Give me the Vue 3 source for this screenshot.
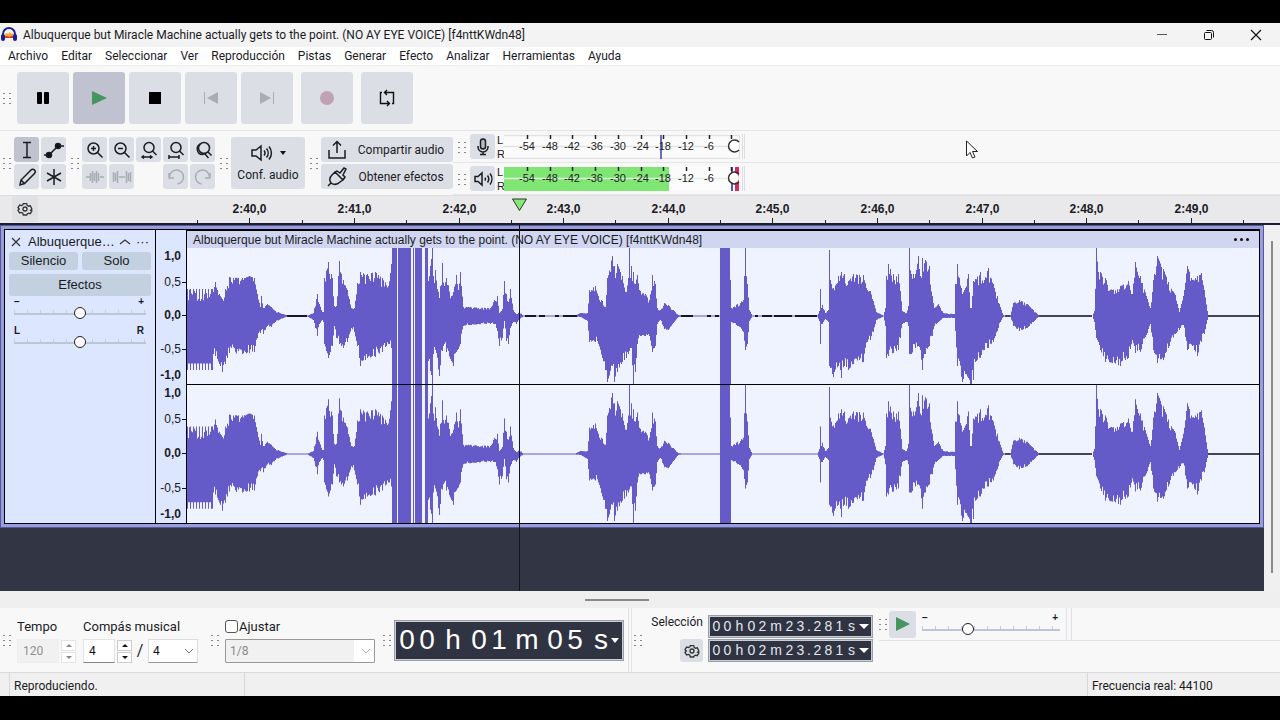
<script setup>
const menus = ['Archivo', 'Editar', 'Seleccionar', 'Ver', 'Reproducción', 'Pistas', 'Generar', 'Efecto', 'Analizar', 'Herramientas', 'Ayuda']
const title = 'Albuquerque but Miracle Machine actually gets to the point. (NO AY EYE VOICE) [f4nttKWdn48]'

// Time axis: 52 px per half second
const rulerTicks = Array.from({ length: 21 }, (_, i) => {
  const seconds = 39.5 + i * 0.5
  return {
    left: Math.round(10 + i * 52.3),
    major: i % 2 === 1,
    label: i % 2 === 1 ? `2:${seconds},0` : ''
  }
})

const meterMarks = Array.from({ length: 10 }, (_, i) => ({
  x: Math.round(23 + i * 22.7),
  label: String(-54 + i * 6)
}))

// Envelope points: x, amplitude above the axis, amplitude below the axis
const envelope = [
  [0, 27, 54], [25, 27, 54], [26, 24, 38], [28, 34, 40], [30, 26, 43], [35, 17, 56], [38, 27, 48], [42, 39, 37], [55, 38, 38], [62, 40, 37], [67, 38, 36], [70, 22, 22],
  [73, 9, 17], [74, 20, 14], [76, 8, 18], [80, 12, 10], [84, 9, 11], [88, 5, 6], [96, 2, 2], [100, .6, .6], [120, .6, .6], [126, 3, 4], [130, 22, 20], [132, 12, 8], [135, 4, 4], [136, 4, 6], [137, 38, 28],
  [141, 54, 42], [145, 38, 30], [147, 10, 10], [149, 10, 22], [152, 55, 28], [156, 36, 32], [160, 26, 26], [164, 8, 12], [167, 8, 16], [170, 33, 30],
  [173, 44, 50], [180, 42, 42], [188, 44, 41], [195, 38, 36], [201, 30, 28], [204, 52, 32], [205, 40, 30], [206, 0, 0], [240, 0, 0], [241, 35, 45], [243, 50, 55],
  [245, 68, 68], [246, 40, 38], [248, 46, 34], [252, 18, 60], [255, 53, 35], [257, 30, 28], [259, 38, 36], [264, 20, 45], [266, 24, 50], [269, 41, 36], [271, 26, 33], [273, 44, 28],
  [276, 9, 10], [283, 9, 9], [303, 8, 8], [307, 16, 8], [310, 20, 15], [312, 3, 30], [315, 7, 22], [317, 35, 5], [319, 22, 25], [321, 14, 28],
  [323, 27, 12], [326, 6, 6], [329, 2, 8], [332, 4, 3], [336, .6, .6], [388, .6, .6], [393, 3, 1], [400, 3, 5], [402, 26, 26], [408, 30, 26], [411, 20, 28],
  [415, 15, 42], [418, 9, 54], [420, 38, 66], [425, 60, 50], [427, 50, 66], [430, 52, 56], [435, 40, 46], [439, 24, 42], [441, 38, 38], [442, 68, 35], [443, 38, 32], [444, 50, 32],
  [446, 44, 68], [448, 32, 56], [450, 41, 28], [453, 25, 20], [458, 22, 20], [462, 16, 20], [465, 41, 36], [468, 32, 30], [470, 8, 8], [473, 6, 4],
  [477, 13, 13], [481, 11, 14], [486, 6, 7], [491, 1, 1], [494, .6, .6], [532, .6, .6], [533, 36, 68], [543, 36, 68], [544, 8, 6], [550, 12, 10], [556, 16, 16],
  [558, 68, 34], [560, 32, 28], [562, 6, 5], [565, .6, .6], [630, .6, .6], [632, 5, 5], [633, 27, 28], [634, 8, 8], [635, 11, 8], [638, 3, 3], [641, 6, 6], [642, 66, 50],
  [643, 36, 52], [646, 28, 61], [651, 40, 50], [654, 44, 62], [657, 42, 50], [661, 35, 54], [666, 42, 48], [676, 41, 46], [680, 26, 26], [683, 25, 24], [686, 15, 16],
  [689, 4, 4], [696, .6, .6], [698, 8, 10], [699, 40, 42], [701, 52, 40], [706, 42, 37], [711, 42, 34], [713, 25, 22], [715, 5, 8], [719, 3, 6], [721, 10, 10],
  [722, 68, 38], [724, 42, 38], [728, 42, 32], [731, 60, 30], [733, 40, 34], [735, 58, 54], [738, 56, 38], [742, 50, 30], [745, 20, 20], [747, 8, 10], [751, 12, 6],
  [756, 3, 2], [767, 2, 2], [768, 32, 15], [770, 52, 50], [775, 22, 66], [778, 28, 58], [781, 42, 62], [783, 8, 68], [784, 8, 68], [786, 35, 64], [788, 37, 46],
  [793, 44, 42], [797, 36, 34], [801, 48, 32], [806, 32, 26], [810, 20, 15], [813, 9, 6], [816, 1, 1], [818, 0, 0], [822, 0, 0], [823, 1, 1], [826, 13, 10],
  [832, 16, 15], [840, 12, 12], [846, 6, 6], [852, 0, 0], [905, 0, 0], [907, 5, 6], [909, 68, 22], [911, 44, 26], [913, 44, 34], [918, 38, 46], [925, 26, 47],
  [933, 30, 50], [941, 35, 42], [945, 22, 24], [948, 54, 37], [953, 40, 36], [960, 17, 17], [963, 8, 8], [966, 36, 34], [970, 60, 47], [976, 47, 44],
  [981, 34, 32], [988, 21, 18], [992, 4, 14], [996, 20, 9], [1000, 50, 34], [1005, 36, 30], [1010, 40, 40], [1014, 43, 26], [1017, 26, 18], [1020, 5, 4],
  [1021, 0, 0], [1072, 0, 0]
]

function noise(n) {
  const v = Math.sin(n * 12.9898) * 43758.5453
  return v - Math.floor(v)
}

function buildWave() {
  const up = []
  const down = []
  let k = 0
  for (let x = 0; x < 1072; x++) {
    while (k < envelope.length - 2 && envelope[k + 1][0] <= x) k++
    const a = envelope[k]
    const b = envelope[k + 1]
    const f = (x - a[0]) / (b[0] - a[0])
    const even = x < 26
    const ju = x === a[0] ? 1 : 1 - (even ? (x % 3 ? 0.45 : 0) * noise(x) : 0.26 * noise(x) ** 2)
    const jd = x === a[0] ? 1 : 1 - (even ? (x % 3 ? 0.12 : 0) : 0.24 * noise(x + 400) ** 2)
    up.push([x, 68 - (a[1] + (b[1] - a[1]) * f) * ju])
    down.push([x, 68 + (a[2] + (b[2] - a[2]) * f) * jd])
  }
  let d = 'M0 68'
  up.forEach(([x, y]) => { d += `V${y.toFixed(1)}H${x + 1}` })
  down.reverse().forEach(([x, y]) => { d += `V${y.toFixed(1)}H${x}` })
  return d + 'Z'
}
const wave = buildWave()
const blocks = [[205, 5], [211, 13], [226, 1], [228, 7], [238, 3], [533, 10]]
const scale = ['1,0', '0,5', '0,0', '-0,5', '-1,0']

const bigTime = ['00', 'h', '01', 'm', '05', 's']
const smallTime = ['00', 'h', '02', 'm', '23', '.', '281', 's']
</script>

<template>
  <div class="screen">
    <main class="window">
      <header class="titlebar">
        <svg class="logo" viewBox="0 0 18 16">
          <path d="M3 10V7a6 6 0 0 1 12 0v3" fill="none" stroke="#1c1ca0" stroke-width="2" />
          <path d="M4.500 8l2-2 2 1 1-2 2 2 2-1v5h-9z" fill="#f5a623" />
          <path d="M4 10l3-1 2 1 3-1 3 1v1H4z" fill="#d8331c" />
          <rect x="1" y="7" width="4" height="7" rx="2" fill="#1c1ca0" />
          <rect x="13" y="7" width="4" height="7" rx="2" fill="#1c1ca0" />
        </svg>
        <h1>{{ title }}</h1>
        <div class="winbtns">
          <button aria-label="Minimizar"><svg viewBox="0 0 12 12"><path d="M1 5.500h10" stroke="#555" /></svg></button>
          <button aria-label="Restaurar"><svg viewBox="0 0 12 12" fill="none" stroke="#111"><rect x="1.500" y="3.500" width="7" height="7" rx="1" /><path d="M3.500 1.500h5a2 2 0 0 1 2 2v5" /></svg></button>
          <button aria-label="Cerrar"><svg viewBox="0 0 12 12"><path d="M1 1l10 10M11 1L1 11" stroke="#111" stroke-width="1.200" /></svg></button>
        </div>
      </header>

      <nav class="menubar">
        <button v-for="m in menus" :key="m">{{ m }}</button>
      </nav>

      <section class="transport">
        <i class="grip"></i>
        <div class="tgroup">
          <button class="tb" aria-label="Pausa"><svg viewBox="0 0 24 24"><rect x="6" y="6" width="5" height="12" rx="1" /><rect x="13" y="6" width="5" height="12" rx="1" /></svg></button>
          <button class="tb on" aria-label="Reproducir"><svg viewBox="0 0 24 24"><path d="M5 5l15 7-15 7z" fill="#479460" /></svg></button>
          <button class="tb" aria-label="Detener"><svg viewBox="0 0 24 24"><rect x="6" y="6" width="12" height="12" /></svg></button>
          <button class="tb" aria-label="Ir al inicio"><svg viewBox="0 0 24 24" fill="#a9adb2"><rect x="5" y="6" width="1" height="12" /><path d="M19 6v12L8 12z" /></svg></button>
          <button class="tb" aria-label="Ir al final"><svg viewBox="0 0 24 24" fill="#a9adb2"><rect x="18" y="6" width="1" height="12" /><path d="M5 6v12l11-6z" /></svg></button>
        </div>
        <button class="tb" aria-label="Grabar"><svg viewBox="0 0 24 24"><circle cx="12" cy="12" r="7" fill="#bfa2b3" /></svg></button>
        <button class="tb" aria-label="Bucle"><svg viewBox="0 0 24 24" fill="none" stroke="#111" stroke-width="1.400"><path d="M7 6.500H5.500v11H14M17 17.500h1.500v-11H10M12 4L9.500 6.500L12 9M12 15l2.500 2.500L12 20" /></svg></button>
      </section>

      <section class="tools">
        <i class="grip"></i>
        <div class="grid two">
          <button class="sq on" aria-label="Selección"><svg viewBox="0 0 24 24"><path d="M8 4.500h8M8 19.500h8M12 4.500v15" /></svg></button>
          <button class="sq" aria-label="Envolvente"><svg viewBox="0 0 24 24"><path d="M2 17h5l9-9h6" /><circle cx="7" cy="17" r="2.500" fill="#111" /><circle cx="16" cy="8" r="2.500" fill="#111" /></svg></button>
          <button class="sq" aria-label="Dibujo"><svg viewBox="0 0 24 24"><path d="M5 20l1-5L16 5c1-1 2.500-1 3.500 0s1 2.500 0 3.500L9.500 18.500zM6 15l3.500 3.500" /></svg></button>
          <button class="sq" aria-label="Multiherramienta"><svg viewBox="0 0 24 24"><path d="M12 4v16M5 8l14 8M19 8L5 16" /></svg></button>
        </div>
        <i class="grip"></i>
        <div class="grid five">
          <button class="sq" aria-label="Ampliar"><svg viewBox="0 0 24 24"><circle cx="10.500" cy="10.500" r="5.500" /><path d="M14.500 14.500l5 5M8 10.500h5M10.500 8v5" /></svg></button>
          <button class="sq" aria-label="Reducir"><svg viewBox="0 0 24 24"><circle cx="10.500" cy="10.500" r="5.500" /><path d="M14.500 14.500l5 5M8 10.500h5" /></svg></button>
          <button class="sq" aria-label="Ajustar selección"><svg viewBox="0 0 24 24"><circle cx="12" cy="9.500" r="5" /><path d="M15.500 13l4 4M5 19h10M7 17.500L5 19l2 1.500M13 17.500l2 1.500-2 1.500" /></svg></button>
          <button class="sq" aria-label="Ajustar proyecto"><svg viewBox="0 0 24 24"><circle cx="12" cy="9.500" r="5" /><path d="M15.500 13l4 4M5 19h10M5 17v4M15 17v4" /></svg></button>
          <button class="sq" aria-label="Alternar zoom"><svg viewBox="0 0 24 24"><circle cx="13" cy="10" r="5.500" /><path d="M17 14l3.500 3.500M9.500 6a5.500 5.500 0 0 0 2 10.500l2-1 4 4.500" /></svg></button>
          <button class="sq off" aria-label="Recortar"><svg viewBox="0 0 24 24"><path d="M3 12h4M17 12h4M7.500 8v8M9.500 6v12M11.500 8v8M13.500 6v12M15.500 8v8" /></svg></button>
          <button class="sq off" aria-label="Silenciar"><svg viewBox="0 0 24 24"><path d="M9 12h6M3.500 7v10M5.500 8v8M7.500 6v12M16.500 6v12M18.500 8v8M20.500 7v10" /></svg></button>
          <span></span>
          <button class="sq off" aria-label="Deshacer"><svg viewBox="0 0 24 24"><path d="M5 8v5h5M5.500 12a7 7 0 1 1 8 7" /></svg></button>
          <button class="sq off" aria-label="Rehacer"><svg viewBox="0 0 24 24"><path d="M19 8v5h-5M18.500 12a7 7 0 1 0-8 7" /></svg></button>
        </div>
        <i class="grip"></i>
        <button class="audiosetup">
          <span><svg viewBox="0 0 24 24"><path d="M2 9v6h4l5 4V5L6 9zM14 9.500a4 4 0 0 1 0 5M16.500 7.500a7 7 0 0 1 0 9M19 5.500a10 10 0 0 1 0 13" /></svg><b class="tri"></b></span>
          Conf. audio
        </button>
        <i class="grip"></i>
        <div class="share">
          <button><svg viewBox="0 0 24 24"><path d="M4 12v8h16v-8M12 15V4M8 7.500L12 3.500l4 4" /></svg><span>Compartir audio</span></button>
          <button><svg viewBox="0 0 24 24"><path d="M3 21l3-3M6 18c-2-3-1-6 1-8l3-3 8 8-3 2c-3 3-6 3-9 1M10 7l2-1 3 2 4-5 2 1-3 6 2 2-2 3" /></svg><span>Obtener efectos</span></button>
        </div>
        <div class="meters">
          <div class="mrow" v-for="kind in ['mic', 'out']" :key="kind">
            <i class="grip"></i>
            <button class="sq" :aria-label="kind === 'mic' ? 'Grabación' : 'Reproducción'">
              <svg v-if="kind === 'mic'" viewBox="0 0 24 24"><rect x="9.500" y="4" width="5" height="10" rx="2.500" fill="#b8bcc2" /><path d="M7 11v1a5 5 0 0 0 10 0v-1M12 17v3M9 19.500h6" /></svg>
              <svg v-else viewBox="0 0 24 24"><path d="M4 9.500v5h3l4 3.500V6L7 9.500zM14 10.500a3 3 0 0 1 0 3M16.500 8.500a6 6 0 0 1 0 7M19 6.500a9 9 0 0 1 0 11" /></svg>
            </button>
            <div class="lr"><span>L</span><span>R</span></div>
            <svg class="meter" viewBox="0 0 236 25">
              <rect width="236" height="25" fill="#fbfbfb" />
              <rect v-if="kind === 'out'" y="1" width="165" height="24" fill="#7fe673" />
              <path d="M0 12.500h236" :stroke="kind === 'out' ? '#e4efe3' : '#e2e2e4'" />
              <path v-if="kind === 'mic'" d="M0 1.500h236M0 24.500h236M235.500 1v24" stroke="#e2e2e4" />
              <path v-if="kind === 'mic'" d="M157 1v24" stroke="#6c6cc8" stroke-width="2" />
              <g v-else><rect x="227" y="1" width="2" height="24" fill="#4a5cc0" /><rect x="231" y="1" width="4" height="24" fill="#d92b5b" /></g>
              <g v-for="m in meterMarks" :key="m.x">
                <path :d="`M${m.x + .5} 1v4`" stroke="#222" />
                <text :x="m.x" y="16" text-anchor="middle">{{ m.label }}</text>
              </g>
              <circle cx="230" cy="12" r="5" fill="#fff" />
              <path d="M235 8a6 6 0 1 0 0 8" fill="none" stroke="#333" stroke-width="1.400" />
            </svg>
          </div>
        </div>
      </section>

      <section class="ruler">
        <button class="gear" aria-label="Opciones de línea de tiempo">
          <svg viewBox="0 0 24 24"><path d="M9.500 4h5l.8 2.600 2 1.200 2.700-.7 2.300 4.900-2 2 2 1-2.500 4-2.500-.8-2 1.200L14.500 21h-5l-.8-2.600-2-1.200-2.700.8L1.500 14l2-2-2-2L4 6l2.700.8 2-1.200z" /><circle cx="12" cy="12" r="3" /></svg>
        </button>
        <div class="axis">
          <div v-for="t in rulerTicks" :key="t.left" class="tick" :class="{ major: t.major }" :style="{ left: t.left + 'px' }"><span>{{ t.label }}</span></div>
        </div>
      </section>

      <section class="workspace">
        <div class="canvas">
          <article class="track">
            <aside class="panel">
              <div class="name">
                <button aria-label="Cerrar pista"><svg viewBox="0 0 12 12"><path d="M2 2l8 8M10 2l-8 8" /></svg></button>
                <span>Albuquerque…</span>
                <button aria-label="Contraer"><svg viewBox="0 0 12 12"><path d="M1 8l5-4 5 4" /></svg></button>
                <button class="dots" aria-label="Menú">···</button>
              </div>
              <div class="pair"><button>Silencio</button><button>Solo</button></div>
              <button class="fx">Efectos</button>
              <label class="slide gain"><span class="ends"><b>−</b><b>+</b></span><input type="range" min="0" max="100" value="50" aria-label="Ganancia"></label>
              <label class="slide"><span class="ends"><b>L</b><b>R</b></span><input type="range" min="0" max="100" value="50" aria-label="Panorama"></label>
            </aside>
            <div class="vscale">
              <ol v-for="c in 2" :key="c"><li v-for="s in scale" :key="s" :class="{ strong: !s.endsWith('5') }">{{ s }}</li></ol>
            </div>
            <div class="clip">
              <header><span>{{ title }}</span><button aria-label="Menú del clip"><i></i><i></i><i></i></button></header>
              <svg v-for="c in 2" :key="c" class="channel" viewBox="0 0 1072 136" preserveAspectRatio="none">
                <path :d="wave" fill="#645bc9" />
                <path d="M818 68h5M852 68h53M1021 68h51" stroke="#0c0c20" stroke-width="1.400" />
                <path v-if="c === 1" d="M100 68h20M338 68h11M352 68h6M368 68h4M376 68h14M494 68h12M520 68h4M528 68h4M568 68h3M575 68h10M587 68h18M608 68h22" stroke="#15152c" stroke-width="2" />
                <rect v-for="b in blocks" :key="b[0]" :x="b[0]" :width="b[1]" y="0" height="136" fill="#645bc9" />
              </svg>
            </div>
          </article>
          <i class="playhead"></i>
        </div>
        <div class="vscroll"><i></i></div>
        <svg class="marker" viewBox="0 0 16 14"><path d="M1 1h14L8 12.500z" fill="#8be57d" stroke="#1f3b1c" /></svg>
      </section>

      <div class="hscroll"><i></i></div>

      <section class="bottom">
        <i class="grip"></i>
        <div class="field tempo">
          <label for="tempo">Tempo</label>
          <div class="line"><input id="tempo" class="num" value="120" disabled><span class="spin dim"><button disabled aria-label="Más"></button><button disabled aria-label="Menos"></button></span></div>
        </div>
        <div class="field sig">
          <label for="beats">Compás musical</label>
          <div class="line">
            <input id="beats" class="num" value="4"><span class="spin"><button aria-label="Más"></button><button aria-label="Menos"></button></span>
            <span class="slash">/</span>
            <span class="sel"><select aria-label="Denominador"><option>4</option></select><svg viewBox="0 0 12 12"><path d="M2 4l4 4 4-4" /></svg></span>
          </div>
        </div>
        <i class="grip"></i>
        <div class="field snap">
          <label class="check"><input type="checkbox">Ajustar</label>
          <span class="sel wide"><select disabled aria-label="Ajustar a"><option>1/8</option></select><svg viewBox="0 0 12 12"><path d="M2 4l4 4 4-4" /></svg></span>
        </div>
        <i class="grip"></i>
        <div class="time big">
          <span v-for="(g, i) in bigTime" :key="i" :class="{ m: g === 'm' }"><b v-for="(c, j) in g" :key="j">{{ c }}</b></span>
          <button aria-label="Formato"></button>
        </div>
        <div class="selection">
          <i class="grip"></i>
          <div class="sellabel"><span>Selección</span>
            <button class="gear" aria-label="Opciones de selección"><svg viewBox="0 0 24 24"><path d="M9.500 4h5l.8 2.600 2 1.200 2.700-.7 2.300 4.900-2 2 2 1-2.500 4-2.500-.8-2 1.200L14.500 21h-5l-.8-2.600-2-1.200-2.700.8L1.500 14l2-2-2-2L4 6l2.700.8 2-1.200z" /><circle cx="12" cy="12" r="3" /></svg></button>
          </div>
          <div class="seltimes">
            <div v-for="n in 2" :key="n" class="time small">
              <span v-for="(g, i) in smallTime" :key="i" :class="{ m: g === 'm', dot: g === '.' }"><b v-for="(c, j) in g" :key="j">{{ c }}</b></span>
              <button aria-label="Formato"></button>
            </div>
          </div>
        </div>
        <div class="speed">
          <div class="speedbar">
            <i class="grip"></i>
            <button class="play" aria-label="Reproducir a velocidad"><svg viewBox="0 0 24 24"><path d="M5 5l14 7-14 7z" fill="#479460" /></svg></button>
            <label class="slide"><span class="ends"><b>−</b><b>+</b></span><input type="range" min="0" max="100" value="32" aria-label="Velocidad"></label>
          </div>
        </div>
      </section>

      <footer class="status">
        <span>Reproduciendo.</span><span></span><span>Frecuencia real: 44100</span>
      </footer>
      <svg class="cursor" viewBox="0 0 14 20"><path d="M1.500 1v15l3.500-3.500 2.500 5.500 2.500-1-2.500-5.500h5z" fill="#fff" stroke="#222" /></svg>
    </main>
  </div>
</template>

<style>
body { background: #000; }
</style>

<style scoped>
* { box-sizing: border-box; }
.screen {
  min-height: 100vh; padding: 23px 0 24px; background: #000; display: flex; flex-direction: column;
  font-family: Roboto, "Noto Sans", sans-serif; font-size: 12px; line-height: 16px; color: #1b1b1f; overflow: hidden;
}
.window { flex: 1; display: flex; flex-direction: column; background: #f8f8f9; position: relative; }
button { font: inherit; color: inherit; border: 0; padding: 0; margin: 0; background: none; white-space: nowrap; }
input, select { font: inherit; margin: 0; }
svg { display: block; }

.titlebar { height: 24px; background: #f3f3f3; display: flex; align-items: center; }
.logo { width: 18px; height: 16px; margin: 0 5px 0 0; }
h1 { font-size: 12px; font-weight: 400; margin: 0; flex: 1; white-space: nowrap; }
.winbtns { display: flex; padding-right: 1px; }
.winbtns button { width: 47px; height: 24px; display: grid; place-items: center; }
.winbtns svg { width: 12px; height: 12px; }
.menubar { height: 18px; background: #fff; display: flex; gap: 1px; padding-left: 2px; }
.menubar button { padding: 0 6px; height: 18px; }

.grip { flex: none; width: 8px; height: 14px; background: radial-gradient(circle, #85858c 1px, transparent 1px) -2px 0 / 6px 5px; }
.transport { height: 66px; display: flex; align-items: center; gap: 8px; padding-left: 3px; border-top: 1px solid #ededef; border-bottom: 1px solid #e4e4e6; }
.transport .grip { margin-right: -2px; }
.tgroup { display: flex; gap: 4px; }
.tb { width: 52px; height: 52px; border-radius: 3px; background: #dbdee4; display: grid; place-items: center; }
.tb svg { width: 24px; height: 24px; }
.tb.on, .sq.on { background: #c1c2d0; }

.tools { height: 64px; display: flex; align-items: center; }
.tools .grip { margin: 0 3px 0 5px; }
.tools > .grip:first-child { margin-left: 3px; }
.tools svg { stroke: #1c1c20; stroke-width: 1.500; fill: none; width: 24px; height: 24px; }
.grid { display: grid; gap: 2px; }
.two { grid-template-columns: repeat(2, 25px); }
.five { grid-template-columns: repeat(5, 25px); }
.sq { width: 25px; height: 25px; border-radius: 3px; background: #dbdee4; display: grid; place-items: center; flex: none; }
.tools .off svg { stroke: #a9adb3; }
.audiosetup { width: 74px; height: 52px; background: #dbdee4; border-radius: 3px; flex: none; }
.audiosetup span { display: flex; justify-content: center; align-items: center; gap: 6px; height: 24px; padding-bottom: 4px; }
.tri { border: 3px solid transparent; border-top: 4px solid #111; border-bottom: 0; }
.share { display: grid; gap: 2px; width: 132px; flex: none; }
.share button { height: 25px; background: #dbdee4; border-radius: 3px; display: flex; align-items: center; padding-left: 4px; }
.share span { flex: 1; text-align: center; }
.meters { flex: 1; align-self: stretch; }
.mrow { height: 32px; display: flex; align-items: center; border-bottom: 1px solid #e6e6e9; }
.tools .mrow .grip { margin-right: 4px; }
.lr { width: 7px; font: 11px/14px "Liberation Sans", sans-serif; display: grid; margin: 0 0 0 2px; }
.tools .meter { width: 241px; height: 25px; stroke: none; padding-right: 2px; border-right: 3px double #dedee2; flex: none; }
.meter text { font: 11px "Liberation Sans", sans-serif; fill: #222; stroke: none; }

.ruler { height: 30px; background: #e9e9eb; border-bottom: 2px solid #1d1d30; border-top: 1px solid #dedee0; display: flex; }
.gear { width: 26px; height: 26px; border-radius: 3px; background: #e0e1e5; display: grid; place-items: center; }
.ruler .gear { margin-left: 12px; }
.gear svg { width: 16px; height: 16px; fill: none; stroke: #333; stroke-width: 2; }
.axis { flex: 1; margin-left: 149px; position: relative; overflow: hidden; }
.tick { position: absolute; bottom: 0; width: 1px; height: 3px; background: #222; display: flex; justify-content: center; }
.tick.major { height: 5px; }
.tick span { position: absolute; bottom: 6px; font: bold 12px/16px "Liberation Sans", sans-serif; }

.workspace { flex: 1; display: flex; position: relative; }
.canvas { flex: 1; background: #323543; position: relative; }
.track { height: 303px; border: 4px solid #979ddf; outline: 1px solid #55598f; outline-offset: -1px; display: flex; font-family: "Liberation Sans", sans-serif; background: #dce6ff; }
.panel { width: 152px; border: 1px solid #000; padding: 3px 4px; flex: none; font-size: 13px; }
.name { display: flex; align-items: center; height: 18px; gap: 6px; }
.name span { width: 84px; white-space: nowrap; }
.name svg { width: 12px; height: 12px; fill: none; stroke: #333; stroke-width: 1.200; }
.name button { margin-left: 1px; flex: none; }
.name .dots { margin-left: -1px; }
.panel .pair { display: grid; grid-template-columns: 1fr 1fr; gap: 4px; margin-top: 1px; }
.panel .pair button, .fx { height: 18px; background: #c3d0df; border-radius: 3px; }
.panel .fx { display: block; width: 100%; height: 22px; margin-top: 4px; }
.slide { display: block; margin: 1px 5px 0; height: 28px; }
.slide.gain { margin-top: 0; }
.ends { display: flex; justify-content: space-between; height: 11px; font: bold 10px/12px "Liberation Sans", sans-serif; padding: 0 2px 0 0; }
.slide input { appearance: none; display: block; width: 100%; height: 12px; background: linear-gradient(#bcc6d4, #bcc6d4) 0 6px / 100% 2px no-repeat, repeating-linear-gradient(90deg, #c5cedb 0 1px, transparent 1px 13px) 0 3px / 100% 4px no-repeat; }
.slide input::-webkit-slider-thumb { appearance: none; width: 12px; height: 12px; border: 1px solid #222; border-radius: 50%; background: #fff; }
.vscale { width: 30px; border-top: 1px solid #000; border-bottom: 1px solid #000; flex: none; display: grid; grid-template-rows: 154px 1fr; font-size: 12px; }
.vscale ol { list-style: none; margin: 0; padding: 17px 3px 0 0; display: grid; grid-template-rows: 18px 1fr 1fr 1fr 18px; align-items: center; text-align: right; }
.vscale ol + ol { padding-top: 0; }
.vscale li { position: relative; line-height: 16px; padding-right: 2px; }
.vscale li::after { content: ""; position: absolute; right: -3px; top: 8px; width: 4px; height: 1px; background: #111; }
.vscale li:first-child::after, .vscale li:last-child::after { display: none; }
.strong { font-weight: bold; }
.clip { flex: 1; min-width: 0; border: 1px solid #000; border-top-width: 2px; background: #eff3ff; display: flex; flex-direction: column; }
.clip header { height: 17px; background: #d0d5f0; padding: 0 10px 0 6px; display: flex; justify-content: space-between; align-items: center; font-size: 12px; white-space: nowrap; flex: none; }
.clip header button { display: flex; gap: 3px; }
.clip header i { width: 3px; height: 3px; border-radius: 50%; background: #111; }
.channel { width: 100%; height: 136px; flex: none; }
.channel + .channel { flex: 1; height: auto; min-height: 0; border-top: 1px solid #000; }
.playhead { position: absolute; left: 519px; top: 0; bottom: 0; width: 1px; background: #15151f; }
.marker { position: absolute; left: 511px; top: -27px; width: 17px; height: 14px; }
.vscroll { width: 16px; background: #f0f0f1; display: flex; justify-content: center; padding: 16px 0 18px; flex: none; }
.vscroll i { width: 2px; background: #8a8a8c; }
.hscroll { height: 17px; background: #efefef; display: flex; justify-content: center; align-items: center; padding-right: 46px; }
.hscroll i { width: 64px; height: 2px; background: #8a8a8c; }

.bottom { height: 65px; display: flex; align-items: center; padding-left: 3px; gap: 6px; border-bottom: 1px solid #dadadc; background: #f8f8f8; }
.field { display: grid; gap: 3px; grid-template-rows: 19px 24px; flex: none; align-content: center; }
.field > label { line-height: 19px; white-space: nowrap; font-size: 13px; }
.tempo { width: 60px; margin-right: 0; }
.sig { width: 116px; margin-right: 6px; }
.line { display: flex; align-items: center; gap: 2px; }
.num { width: 32px; height: 24px; border: 1px solid #e3e3e3; border-bottom-color: #888; background: #fff; padding: 0 5px; color: #111; }
.tempo .num { width: 42px; background: #f1f1f1; border-color: #eee; color: #909090; }
.spin { width: 15px; display: grid; gap: 1px; }
.spin button { height: 11px; width: 15px; border: 1px solid #ccc; display: grid; place-items: center; background: #fdfdfd; }
.spin button::after { content: ""; border: 3px solid transparent; border-bottom: 3px solid #111; border-top: 0; }
.spin button + button::after { border-bottom: 0; border-top: 3px solid #111; }
.dim button { border-color: #e4e4e4; }
.dim button::after { opacity: .5; }
.slash { width: 12px; text-align: center; font-size: 16px; }
.sel { position: relative; display: block; width: 50px; }
.sel select { appearance: none; width: 100%; height: 24px; border: 1px solid #ddd; border-bottom-color: #999; border-radius: 1px; background: #fff; padding: 0 4px; color: #111; }
.sel svg { position: absolute; right: 3px; top: 6px; width: 12px; height: 12px; fill: none; stroke: #777; pointer-events: none; }
.sel.wide { width: 150px; }
.wide select { border-color: #999; color: #888; background: linear-gradient(90deg, #f1f1f1 128px, #fff 128px); opacity: 1; }
.wide svg { opacity: .6; }
.snap { margin-right: 2px; }
.check { display: flex; align-items: center; gap: 1px; }
.check input { appearance: none; width: 13px; height: 13px; border: 1px solid #555; border-radius: 3px; background: #fff; }
.time { display: flex; align-items: center; background: #2f3342; color: #fff; font-family: "Liberation Sans", sans-serif; border: 2px solid #c9cdd4; outline: 1px solid #9a9ea8; outline-offset: -1px; flex: none; overflow: hidden; }
.time span { display: flex; }
.time b { font-weight: 400; text-align: center; }
.time button { margin-left: auto; flex: none; border: 5px solid transparent; border-top: 5px solid #fff; border-bottom: 0; }
.big { width: 230px; height: 41px; font-size: 28px; line-height: 36px; gap: 6px; padding-left: 1px; margin-left: -3px; }
.big b { width: 20px; }
.big .m b { width: 24px; }
.big button { border-width: 5px 4px 0; margin-left: -6px; }
.small { width: 165px; height: 23px; font-size: 14px; line-height: 19px; gap: 1px; padding: 0 2px 0 1px; color: #e4e6ec; }
.small b { width: 11px; }
.small .m b { width: 14px; }
.small .dot b { width: 4px; }
.selection { align-self: stretch; display: flex; align-items: center; border-left: 4px double #e2e2e4; padding-left: 2px; gap: 5px; margin-left: -2px; flex: none; }
.sellabel { display: grid; justify-items: end; gap: 9px; width: 56px; padding-bottom: 4px; }
.sellabel .gear { width: 23px; height: 23px; background: #dbdee4; }
.seltimes { display: grid; gap: 1px; padding-bottom: 4px; }
.speed { flex: 1; align-self: stretch; }
.speedbar { display: flex; align-items: center; height: 33px; border-bottom: 1px solid #e0e2e6; gap: 2px; }
.play { width: 27px; height: 27px; background: #dbdee4; border-radius: 3px; display: grid; place-items: center; }
.play svg { width: 24px; height: 24px; }
.speedbar .slide { width: 138px; margin: 3px 4px 0; }
.speedbar::after { content: ""; width: 4px; height: 32px; border-left: 1px solid #dfe0e3; border-right: 1px solid #dfe0e3; }

.status { height: 23px; background: #f0f0f0; display: grid; grid-template-columns: 235px 1fr 193px; padding-left: 9px; }
.status span { border-left: 1px solid #d8d8d8; padding: 5px 4px 0; }
.cursor { position: absolute; left: 965px; top: 117px; width: 14px; height: 20px; }
</style>
